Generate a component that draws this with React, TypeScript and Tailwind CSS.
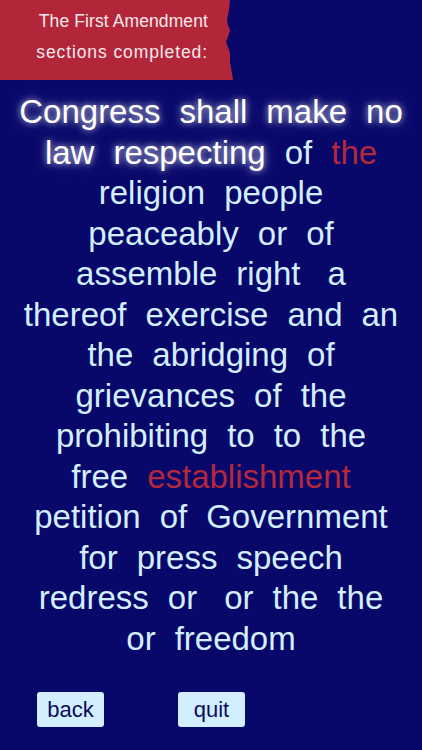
import type { ReactNode } from 'react';

type Tone = 'glow' | 'blue' | 'red';
type Word = { text: string; tone?: Tone; wide?: boolean };

const w = (text: string, tone: Tone = 'blue', wide = false): Word => ({ text, tone, wide });

const LINES: Word[][] = [
  [w('Congress', 'glow'), w('shall', 'glow'), w('make', 'glow'), w('no', 'glow')],
  [w('law', 'glow'), w('respecting', 'glow'), w('of'), w('the', 'red')],
  [w('religion'), w('people')],
  [w('peaceably'), w('or'), w('of')],
  [w('assemble'), w('right'), w('a', 'blue', true)],
  [w('thereof'), w('exercise'), w('and'), w('an')],
  [w('the'), w('abridging'), w('of')],
  [w('grievances'), w('of'), w('the')],
  [w('prohibiting'), w('to'), w('to'), w('the')],
  [w('free'), w('establishment', 'red')],
  [w('petition'), w('of'), w('Government')],
  [w('for'), w('press'), w('speech')],
  [w('redress'), w('or'), w('or', 'blue', true), w('the'), w('the')],
  [w('or'), w('freedom')],
];

const toneClass: Record<Tone, string> = {
  glow: 'text-white [text-shadow:0_0_6px_rgba(255,255,255,0.7),0_0_16px_rgba(200,220,255,0.45)]',
  blue: 'text-[#d3eeff]',
  red: 'text-[#b3283d]',
};

function Banner() {
  return (
    <div className="flex h-[80px] w-[234px]">
      <div className="flex h-full w-[226px] flex-col items-end bg-[#b3263a] pr-[18px] pt-[6px] text-[17.5px] leading-[31px] text-[#f4e9ec]">
        <span className="tracking-[0.1px]">The First Amendment</span>
        <span className="tracking-[0.9px]">sections completed:</span>
      </div>
      {/* torn right edge */}
      <svg width="8" height="80" viewBox="0 0 8 80" className="block">
        <polygon
          points="0,0 4,0 3,10 1,20 2,25 4,30 2,37 0,42 2,47 4,53 4,63 6,73 7,80 0,80"
          fill="#b3263a"
        />
      </svg>
    </div>
  );
}

function Button({ children }: { children: ReactNode }) {
  return (
    <button
      type="button"
      className="flex h-[35px] w-[67px] items-center justify-center rounded-[3px] bg-[#d3efff] pb-[1px] text-[22px] text-[#0b0b5c]"
    >
      {children}
    </button>
  );
}

export default function App() {
  return (
    <div className="flex h-[750px] w-full flex-col overflow-hidden bg-[#08076a] font-['Liberation_Sans',Arial,sans-serif]">
      <Banner />

      <div className="mt-[12px] flex flex-col items-center text-[33px] leading-[40.5px]">
        {LINES.map((line, i) => (
          <div key={i} className="flex justify-center gap-[19px] whitespace-nowrap">
            {line.map((word, j) => (
              <span key={j} className={`${toneClass[word.tone ?? 'blue']} ${word.wide ? 'ml-[8px]' : ''}`}>
                {word.text}
              </span>
            ))}
          </div>
        ))}
      </div>

      <div className="mt-[33px] flex gap-[74px] pl-[37px]">
        <Button>back</Button>
        <Button>quit</Button>
      </div>
    </div>
  );
}
